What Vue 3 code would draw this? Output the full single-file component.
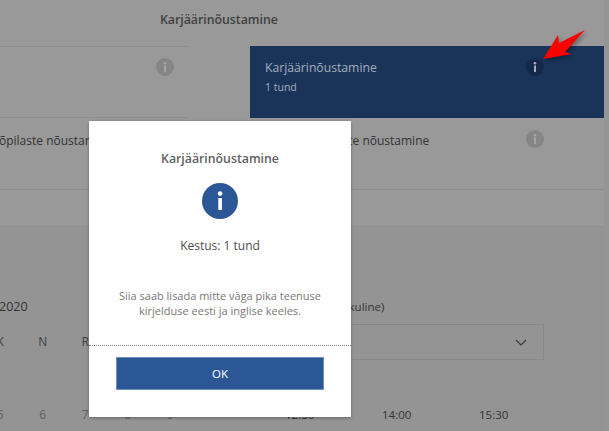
<script setup>
const weekdays = ['K', 'N', 'R']
const days = ['5', '6', '7', '8', '9']
const times = ['12:30', '14:00', '15:30']
</script>

<template>
  <div class="page">
    <section class="top">
      <h2 class="heading">Karjäärinõustamine</h2>
      <div class="columns">
        <div class="col left">
          <div class="item">
            <span></span>
            <svg class="info" viewBox="0 0 18 18"><circle cx="9" cy="9" r="9" fill="#868686" /><rect x="8" y="7.5" width="2" height="6.5" fill="#a5a5a5" /><circle cx="9" cy="5.2" r="1.3" fill="#a5a5a5" /></svg>
          </div>
          <div class="item"><span class="clip">õpilaste nõustamine</span></div>
        </div>
        <div class="col right">
          <div class="item selected">
            <div class="sel-text">
              <div class="sel-title">Karjäärinõustamine</div>
              <div class="sel-sub">1 tund</div>
            </div>
            <svg class="info" viewBox="0 0 18 18"><circle cx="9" cy="9" r="9" fill="#14294a" /><rect x="8" y="7.5" width="2" height="6.5" fill="#a3adbd" /><circle cx="9" cy="5.2" r="1.3" fill="#a3adbd" /></svg>
          </div>
          <div class="item">
            <span class="second">Lapsevanemate nõustamine</span>
            <svg class="info" viewBox="0 0 18 18"><circle cx="9" cy="9" r="9" fill="#868686" /><rect x="8" y="7.5" width="2" height="6.5" fill="#a5a5a5" /><circle cx="9" cy="5.2" r="1.3" fill="#a5a5a5" /></svg>
          </div>
        </div>
      </div>
    </section>

    <section class="bottom">
      <div class="cal">
        <div class="month">2020</div>
        <div class="week">
          <span v-for="d in weekdays" :key="d">{{ d }}</span>
        </div>
        <div class="week dates">
          <span v-for="d in days" :key="d">{{ d }}</span>
        </div>
      </div>
      <div class="slots">
        <div class="slot-label">(nädalakuline)</div>
        <div class="select">
          <svg width="12" height="7" viewBox="0 0 12 7"><path d="M1 1l5 5 5-5" fill="none" stroke="#3a3a3a" stroke-width="1.2" /></svg>
        </div>
        <div class="times">
          <span v-for="t in times" :key="t">{{ t }}</span>
        </div>
      </div>
    </section>

    <div class="modal">
      <div class="modal-title">Karjäärinõustamine</div>
      <svg class="modal-icon" viewBox="0 0 36 36"><circle cx="18" cy="18" r="18" fill="#2b5797" /><rect x="16.3" y="15" width="3.6" height="12" fill="#fff" /><circle cx="18.1" cy="10.6" r="2.3" fill="#fff" /></svg>
      <div class="duration">Kestus: 1 tund</div>
      <p class="desc">Siia saab lisada mitte väga pika teenuse<br />kirjelduse eesti ja inglise keeles.</p>
      <div class="rule"></div>
      <button class="ok">OK</button>
    </div>

    <svg class="arrow" width="60" height="45" viewBox="535 25 60 45"><polygon points="543,59 558,35 559,43 585,30 565,52 572,54" fill="#fe0000" /></svg>
  </div>
</template>

<style>
html, body { margin: 0; background: #959595; }
</style>

<style scoped>
.page {
  position: relative;
  width: 609px;
  height: 431px;
  overflow: hidden;
  background: #959595;
  font-family: "Open Sans", "Noto Sans", sans-serif;
  color: #333;
  font-size: 12px;
}
.top {
  width: 604px;
  height: 227px;
  background: #999;
  box-sizing: border-box;
  border-bottom: 1px solid #8f8f8f;
}
.heading {
  margin: 0;
  height: 46px;
  box-sizing: border-box;
  padding: 12px 0 0 160px;
  font-size: 12.3px;
  line-height: 16px;
  font-weight: 600;
  color: #404040;
}
.columns {
  display: grid;
  grid-template-columns: 189px 354px;
  gap: 61px;
}
.col .item {
  height: 71px;
  box-sizing: border-box;
  border-top: 1px solid #8d8d8d;
  display: flex;
  justify-content: space-between;
  align-items: flex-start;
  padding: 11px 15px 0 15px;
  font-size: 12px;
  line-height: 18px;
}
.col .item:last-child { height: 73px; border-bottom: 1px solid #8d8d8d; }
.col.right .item:last-child { height: 72px; border-top: none; padding: 12px 60px 0 16px; }
.col.right .selected { padding: 12px 60px 0 15px; }
.clip { margin: 3px 0 0 -16px; white-space: nowrap; }
.second { margin: 2px 0 0 5px; white-space: nowrap; }
.info { width: 18px; height: 18px; display: block; flex: none; }
.col .selected {
  height: 72px;
  background: #1a3459;
  border: none;
  color: #a5aebd;
}
.sel-text { margin-top: 1px; }
.sel-title { font-size: 12.2px; line-height: 18px; }
.sel-sub { font-size: 10.5px; line-height: 16px; margin-top: 2px; }
.bottom {
  display: flex;
  width: 604px;
  height: 204px;
  background: #949494;
}
.cal {
  width: 250px;
  padding-top: 72px;
  box-sizing: border-box;
}
.month {
  margin-left: -1px;
  font-size: 12.5px;
  line-height: 16px;
  color: #333;
}
.week {
  display: flex;
  margin-top: 19px;
  margin-left: -21px;
  font-size: 12px;
  line-height: 16px;
  color: #3f3f3f;
}
.week span { width: 42.5px; text-align: center; }
.week.dates { margin-top: 57px; color: #5f5f5f; }
.slots {
  padding-top: 72px;
  flex: 1;
  min-width: 0;
}
.slot-label {
  margin-left: 59px;
  font-size: 11.5px;
  line-height: 16px;
  white-space: nowrap;
}
.select {
  margin-top: 9px;
  width: 294px;
  height: 36px;
  box-sizing: border-box;
  border: 1px solid #888;
  display: flex;
  align-items: center;
  justify-content: flex-end;
  padding-right: 16px;
}
.times {
  display: flex;
  margin-top: 47px;
  margin-left: 35px;
  font-size: 11.5px;
  line-height: 16px;
}
.times span { width: 97px; }

.modal {
  position: absolute;
  left: 89px;
  top: 121px;
  width: 262px;
  height: 296px;
  box-sizing: border-box;
  background: #fff;
  box-shadow: 0 1px 3px rgba(0, 0, 0, 0.3);
  display: flex;
  flex-direction: column;
  align-items: center;
  color: #555;
}
.modal-title {
  margin-top: 29px;
  font-size: 12.3px;
  line-height: 18px;
  font-weight: 600;
  color: #5f5f5f;
}
.modal-icon { width: 36px; height: 36px; margin-top: 15px; display: block; }
.duration { margin-top: 18px; font-size: 12px; line-height: 18px; color: #4d4d4d; }
.desc {
  margin: 33px 0 0;
  font-size: 11px;
  line-height: 15px;
  text-align: center;
  color: #777;
  white-space: nowrap;
}
.rule {
  align-self: stretch;
  margin-top: 27px;
  border-top: 1px dotted #888;
}
.ok {
  margin-top: 11px;
  width: 208px;
  height: 33px;
  background: #2b5797;
  border: 1px solid #6f8fbd;
  color: #fff;
  font: inherit;
  font-size: 11.5px;
  padding: 0;
}
.arrow {
  position: absolute;
  left: 535px;
  top: 25px;
  filter: drop-shadow(2px 2px 2px rgba(0, 0, 0, 0.35));
}
</style>
